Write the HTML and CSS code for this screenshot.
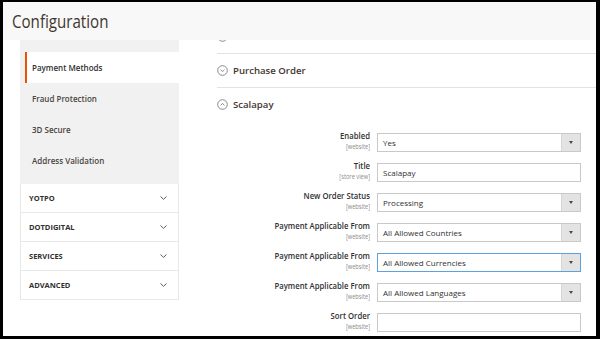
FILE: index.html
```html
<!DOCTYPE html>
<html lang="en">
<head>
    <meta charset="UTF-8">
    <meta name="viewport" content="width=device-width, initial-scale=1.0">
    <title>Configuration</title>
    <link rel="stylesheet" href="styles.css">
</head>
<body>
    <div class="frame">
        <div class="page-header">
            <h1>Configuration</h1>
        </div>
        <div class="page">
            <div class="sidebar">
                <ul class="nav-group">
                    <li class="nav-item active">Payment Methods</li>
                    <li class="nav-item">Fraud Protection</li>
                    <li class="nav-item">3D Secure</li>
                    <li class="nav-item">Address Validation</li>
                </ul>
                <ul class="nav-tabs">
                    <li class="nav-tab"><span>YOTPO</span><svg class="chev" width="7" height="4" viewBox="0 0 7 4"><path d="M0.5 0.5 L3.5 3.3 L6.5 0.5" fill="none" stroke="#514943" stroke-width="0.9"/></svg></li>
                    <li class="nav-tab"><span>DOTDIGITAL</span><svg class="chev" width="7" height="4" viewBox="0 0 7 4"><path d="M0.5 0.5 L3.5 3.3 L6.5 0.5" fill="none" stroke="#514943" stroke-width="0.9"/></svg></li>
                    <li class="nav-tab"><span>SERVICES</span><svg class="chev" width="7" height="4" viewBox="0 0 7 4"><path d="M0.5 0.5 L3.5 3.3 L6.5 0.5" fill="none" stroke="#514943" stroke-width="0.9"/></svg></li>
                    <li class="nav-tab"><span>ADVANCED</span><svg class="chev" width="7" height="4" viewBox="0 0 7 4"><path d="M0.5 0.5 L3.5 3.3 L6.5 0.5" fill="none" stroke="#514943" stroke-width="0.9"/></svg></li>
                </ul>
            </div>
            <div class="main">
                <div class="section first">
                    <svg class="toggle" width="11" height="11" viewBox="0 0 11 11"><circle cx="5.5" cy="5.5" r="4.8" fill="none" stroke="#6d6d6d" stroke-width="0.8"/><path d="M3.5 4.7 L5.5 6.5 L7.5 4.7" fill="none" stroke="#6d6d6d" stroke-width="0.8"/></svg>
                </div>
                <div class="section">
                    <svg class="toggle" width="11" height="11" viewBox="0 0 11 11"><circle cx="5.5" cy="5.5" r="4.8" fill="none" stroke="#6d6d6d" stroke-width="0.8"/><path d="M3.5 4.7 L5.5 6.5 L7.5 4.7" fill="none" stroke="#6d6d6d" stroke-width="0.8"/></svg>
                    <span>Purchase Order</span>
                </div>
                <div class="section open">
                    <svg class="toggle" width="11" height="11" viewBox="0 0 11 11"><circle cx="5.5" cy="5.5" r="4.8" fill="none" stroke="#6d6d6d" stroke-width="0.8"/><path d="M3.5 6.3 L5.5 4.5 L7.5 6.3" fill="none" stroke="#6d6d6d" stroke-width="0.8"/></svg>
                    <span>Scalapay</span>
                </div>
                <div class="form">
                    <div class="row">
                        <div class="label">Enabled<small>[website]</small></div>
                        <div class="control select"><span>Yes</span><i class="arrow"></i></div>
                    </div>
                    <div class="row">
                        <div class="label">Title<small>[store view]</small></div>
                        <div class="control"><span>Scalapay</span></div>
                    </div>
                    <div class="row">
                        <div class="label">New Order Status<small>[website]</small></div>
                        <div class="control select"><span>Processing</span><i class="arrow"></i></div>
                    </div>
                    <div class="row">
                        <div class="label">Payment Applicable From<small>[website]</small></div>
                        <div class="control select"><span>All Allowed Countries</span><i class="arrow"></i></div>
                    </div>
                    <div class="row">
                        <div class="label">Payment Applicable From<small>[website]</small></div>
                        <div class="control select focus"><span>All Allowed Currencies</span><i class="arrow"></i></div>
                    </div>
                    <div class="row">
                        <div class="label">Payment Applicable From<small>[website]</small></div>
                        <div class="control select"><span>All Allowed Languages</span><i class="arrow"></i></div>
                    </div>
                    <div class="row">
                        <div class="label">Sort Order<small>[website]</small></div>
                        <div class="control"><span></span></div>
                    </div>
                </div>
            </div>
        </div>
    </div>
</body>
</html>
```
FILE: styles.css
```css
body {
    margin: 0;
    padding: 0;
    font-family: 'Open Sans', 'Liberation Sans', sans-serif;
    color: #303030;
}
.frame {
    height: 339px;
    box-sizing: border-box;
    border-style: solid;
    border-color: #000;
    border-width: 2px 4px 3px 3px;
    background-color: #fff;
    overflow: hidden;
}
.page-header {
    height: 38px;
    background-color: #f8f8f8;
    display: flex;
    align-items: center;
    padding-left: 9px;
}
.page-header h1 {
    margin: 0;
    font-size: 18px;
    font-weight: 400;
    color: #41362f;
    transform: scaleX(0.84);
    transform-origin: left center;
}
.page {
    display: flex;
    align-items: flex-start;
}
.sidebar {
    width: 159px;
    margin-left: 17px;
}
.nav-group, .nav-tabs {
    list-style: none;
    margin: 0;
    padding: 0;
}
.nav-group {
    background-color: #f1f1f1;
    padding: 12px 0 8px 5px;
}
.nav-item {
    height: 31px;
    display: flex;
    align-items: center;
    padding-left: 7px;
    font-size: 8px;
    font-weight: 600;
    color: #4a4542;
}
.nav-item.active {
    background-color: #fff;
    border-left: 2px solid #eb5202;
    padding-left: 5px;
    color: #303030;
}
.nav-tabs {
    border-left: 1px solid #e8e8e8;
    border-right: 1px solid #e8e8e8;
}
.nav-tab {
    height: 28px;
    border-bottom: 1px solid #e8e8e8;
    display: flex;
    align-items: center;
    justify-content: space-between;
    padding: 0 11px 0 8px;
    font-size: 7.5px;
    font-weight: 700;
    color: #303030;
}
.main {
    flex: 1;
    margin-left: 38px;
    height: 296px;
    overflow: hidden;
}
.section {
    height: 33px;
    border-bottom: 1px solid #e3e3e3;
    display: flex;
    align-items: center;
    gap: 5px;
    font-size: 9.6px;
    font-weight: 600;
    color: #41362f;
}
.section.first {
    margin-top: -20px;
}
.section.open {
    border-bottom: none;
    height: 32px;
}
.form {
    margin-top: 13px;
}
.row {
    display: flex;
    height: 30px;
    gap: 7px;
}
.label {
    width: 153px;
    text-align: right;
    font-size: 8.6px;
    font-weight: 600;
    line-height: 11px;
    color: #303030;
    margin-top: -2px;
    transform: scaleX(0.9);
    transform-origin: right top;
}
.label small {
    display: block;
    font-size: 6.3px;
    font-weight: 400;
    line-height: 9px;
    color: #8a8a8a;
}
.control {
    width: 204px;
    height: 19px;
    box-sizing: border-box;
    border: 1px solid #c9c9c9;
    display: flex;
    align-items: center;
    font-size: 8px;
    color: #303030;
}
.control span {
    flex: 1;
    padding-left: 5px;
}
.control.focus {
    border-color: #5ba3e0;
}
.arrow {
    width: 18px;
    align-self: stretch;
    background-color: #e3e3e3;
    border-left: 1px solid #d6d6d6;
    display: flex;
    align-items: center;
    justify-content: center;
}
.arrow::after {
    content: '';
    border-left: 2.5px solid transparent;
    border-right: 2.5px solid transparent;
    border-top: 3px solid #514943;
}
```
